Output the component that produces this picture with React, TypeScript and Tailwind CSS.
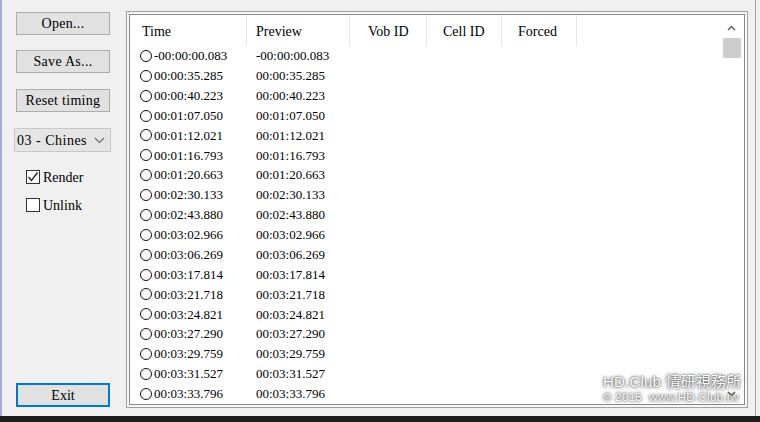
import React from "react";

const times = [
  "-00:00:00.083",
  "00:00:35.285",
  "00:00:40.223",
  "00:01:07.050",
  "00:01:12.021",
  "00:01:16.793",
  "00:01:20.663",
  "00:02:30.133",
  "00:02:43.880",
  "00:03:02.966",
  "00:03:06.269",
  "00:03:17.814",
  "00:03:21.718",
  "00:03:24.821",
  "00:03:27.290",
  "00:03:29.759",
  "00:03:31.527",
  "00:03:33.796",
];

const serif = "[font-family:'Liberation_Serif','Noto_Sans_CJK_TC',serif]";

function Btn({ children, top }: { children: React.ReactNode; top: string }) {
  return (
    <div
      className={`${top} w-[94px] h-[23px] bg-[#e1e1e1] border border-[#adadad] flex items-center justify-center text-[14px] tracking-[0.3px] text-black`}
    >
      {children}
    </div>
  );
}

export default function App() {
  return (
    <div className={`w-[760px] h-[422px] bg-[#f0f0f0] overflow-hidden flex flex-col relative ${serif}`}>
      <div className="flex h-[416px] border-l-2 border-[#a8a8d8]">
        {/* left panel */}
        <div className="w-[124px] flex flex-col pl-[14px] pt-[12px]">
          <Btn top="">Open...</Btn>
          <Btn top="mt-[15px]">Save As...</Btn>
          <Btn top="mt-[16px]">Reset timing</Btn>
          <div className="mt-[16px] -ml-[2px] w-[97px] h-[24px] bg-[#e5e5e5] border border-[#c8c8c8] flex items-center justify-between pl-[2px] pr-[5px] text-[14px] tracking-[0.5px] text-black">
            <span>03 - Chines</span>
            <svg width="11" height="7" viewBox="0 0 11 7">
              <path d="M1 1 L5.5 5.5 L10 1" fill="none" stroke="#6a6a6a" strokeWidth="1.2" />
            </svg>
          </div>
          <div className="mt-[18px] ml-[10px] flex items-center h-[14px] text-[14px]">
            <div className="w-[14px] h-[14px] bg-white border border-[#333] flex items-center justify-center">
              <svg width="12" height="12" viewBox="0 0 12 12">
                <path d="M1.5 6 L4.5 9.5 L10.5 1.5" fill="none" stroke="#222" strokeWidth="1.3" />
              </svg>
            </div>
            <span className="ml-[3px]">Render</span>
          </div>
          <div className="mt-[14px] ml-[10px] flex items-center h-[14px] text-[14px]">
            <div className="w-[14px] h-[14px] bg-white border border-[#333]" />
            <span className="ml-[3px]">Unlink</span>
          </div>
          <div className="flex-1" />
          <div className="mb-[9px] w-[94px] h-[24px] border-2 border-[#0078d7] bg-[#e1e1e1] flex items-center justify-center text-[14px] text-black">
            Exit
          </div>
        </div>

        {/* list frame */}
        <div className="mt-[11px] w-[622px] h-[397px] border border-[#a0a0a0] bg-[#f8f8f8] p-[2px]">
          <div className="w-full h-full border border-[#8a8a8a] bg-white flex">
            <div className="flex-1 flex flex-col">
              {/* header */}
              <div className="h-[31px] flex text-[14px] text-black">
                {[
                  ["Time", "w-[117px]", "pl-[12px]"],
                  ["Preview", "w-[103px]", "pl-[9px]"],
                  ["Vob ID", "w-[77px]", "pl-[18px]"],
                  ["Cell ID", "w-[75px]", "pl-[16px]"],
                  ["Forced", "w-[75px]", "pl-[16px]"],
                ].map(([t, w, p]) => (
                  <div key={t} className={`${w} ${p} h-full flex items-center pt-[2px] border-r border-[#e5e5e5]`}>
                    {t}
                  </div>
                ))}
              </div>
              {/* rows */}
              <div className="flex flex-col text-[13px] text-black">
                {times.map((t) => (
                  <div key={t} className="h-[19.88px] flex items-center">
                    <div className="w-[117px] flex items-center pl-[10px]">
                      <div className="w-[12px] h-[12px] rounded-full border border-[#111]" />
                      <span className="ml-[2px]">{t}</span>
                    </div>
                    <div className="pl-[9px]">{t}</div>
                  </div>
                ))}
              </div>
            </div>
            {/* scrollbar */}
            <div className="w-[19px] mr-[3px] flex flex-col items-center">
              <div className="h-[23px] flex items-center justify-center pt-[3px]">
                <svg width="9" height="6" viewBox="0 0 9 6">
                  <path d="M1 5 L4.5 1.5 L8 5" fill="none" stroke="#606060" strokeWidth="1.5" />
                </svg>
              </div>
              <div className="w-[18px] h-[20px] bg-[#cdcdcd]" />
              <div className="flex-1" />
              <div className="h-[20px] flex items-center justify-center">
                <svg width="9" height="6" viewBox="0 0 9 6">
                  <path d="M1 1 L4.5 4.5 L8 1" fill="none" stroke="#606060" strokeWidth="1.5" />
                </svg>
              </div>
            </div>
          </div>
        </div>

        {/* right edge */}
        <div className="ml-[7px] w-px h-full bg-[#a0a0a0]" />
        <div className="flex-1 bg-[#f0f0f0]" />
      </div>
      <div className="h-[6px] bg-[#1c1c1c]" />

      {/* watermark */}
      <div className="absolute left-[603px] top-[373px] flex flex-col text-white [font-family:'Liberation_Sans','Noto_Sans_CJK_TC',sans-serif] [text-shadow:0_0_2px_rgba(0,0,0,0.9),0_0_4px_rgba(0,0,0,0.6)] opacity-90">
        <div className="text-[15px] leading-[18px] tracking-[0.2px]">HD.Club 情研視務所</div>
        <div className="text-[11.5px] leading-[13px] tracking-[0.3px]">© 2015 &nbsp;www.HD.Club.tw</div>
      </div>
    </div>
  );
}
